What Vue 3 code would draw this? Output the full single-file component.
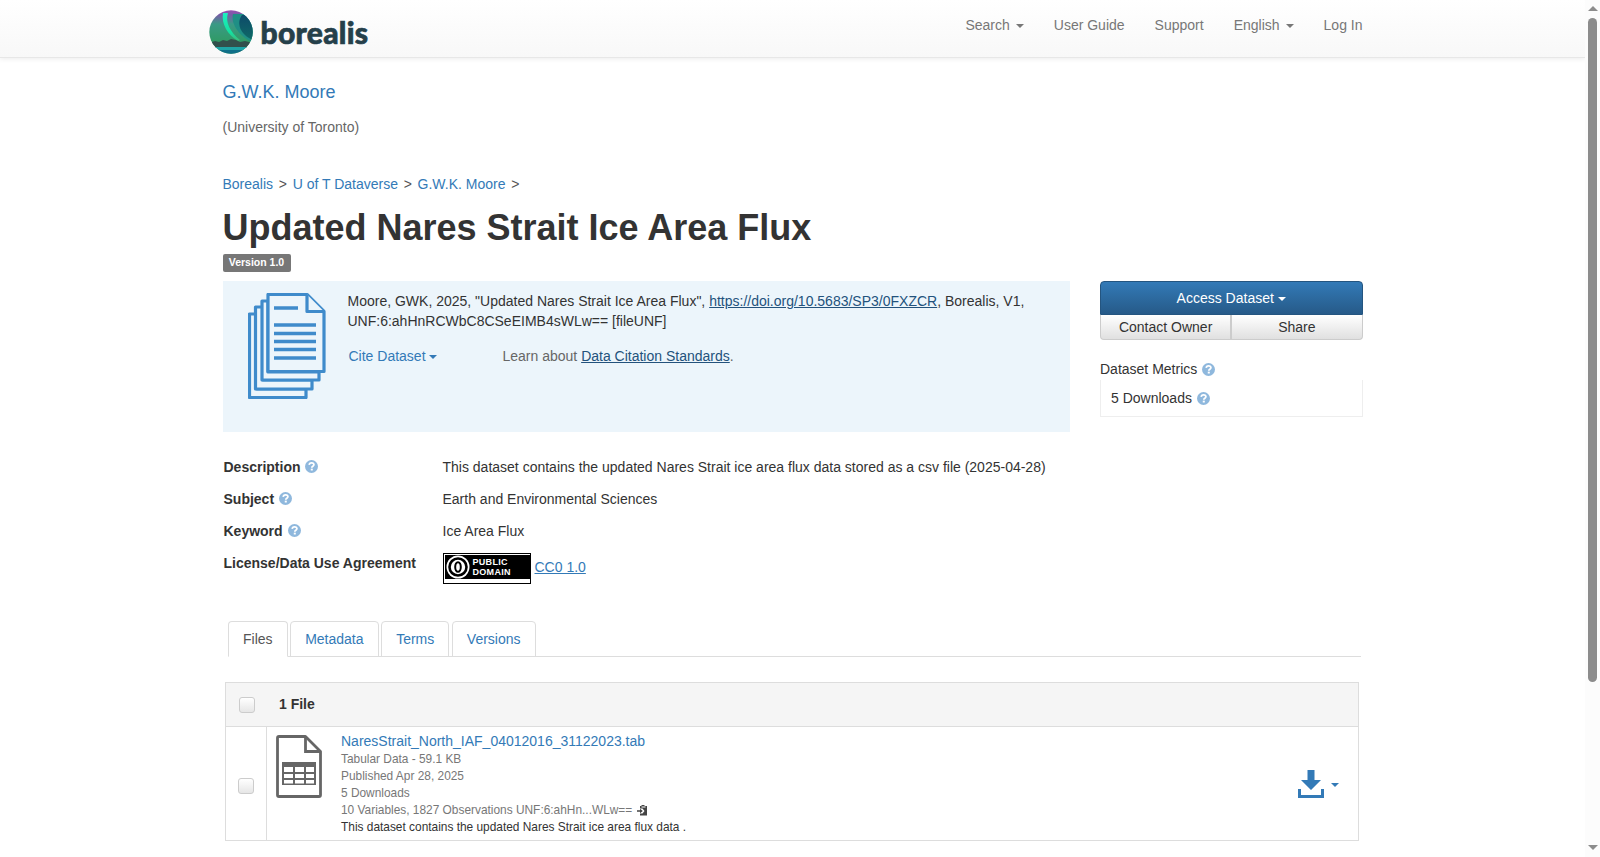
<template>
  <div class="shell">
    <div class="page">
      <header class="navbar">
        <div class="nav-inner">
          <a class="brand" href="#">
            <svg class="logo-mark" viewBox="0 0 44 44" width="44" height="44">
              <defs>
                <clipPath id="logoClip"><circle cx="22" cy="22" r="21.7" /></clipPath>
                <linearGradient id="skyGrad" x1="0" y1="0" x2="0" y2="1">
                  <stop offset="0" stop-color="#9a4fb0" />
                  <stop offset="0.1" stop-color="#7a5aa8" />
                  <stop offset="0.32" stop-color="#3a9a86" />
                  <stop offset="0.75" stop-color="#2f9a62" />
                </linearGradient>
                <linearGradient id="mintGrad" x1="0" y1="0" x2="0" y2="1">
                  <stop offset="0" stop-color="#1cf0c0" />
                  <stop offset="0.7" stop-color="#14e0a0" />
                  <stop offset="1" stop-color="#3fb87a" />
                </linearGradient>
                <linearGradient id="darkGrad" x1="0" y1="0" x2="0" y2="1">
                  <stop offset="0" stop-color="#0d4a6a" />
                  <stop offset="1" stop-color="#0f6a66" />
                </linearGradient>
              </defs>
              <g clip-path="url(#logoClip)">
                <rect width="44" height="44" fill="url(#skyGrad)" />
                <path d="M24 4C22 12 27 24 44 33V4Z" fill="#1f8f85" />
                <path d="M33 5C27 13 31 25 44 30V5Z" fill="url(#darkGrad)" />
                <path d="M14 3H19C16 12 21 22 31 30L29 31C19 25 12 14 14 3Z" fill="url(#mintGrad)" />
                <path d="M0 33L6 31 10 32 14 30 18 31 22 29 27 30 31 32 36 31 44 33V38H0Z" fill="#32504c" />
                <rect y="37" width="44" height="3" fill="#1fa5a6" />
                <rect y="40" width="44" height="4" fill="#0f6f88" />
              </g>
            </svg>
            <span class="logo-text">borealis</span>
          </a>
          <nav class="nav-links">
            <a v-for="item in navItems" :key="item.label" href="#">
              {{ item.label }}<span v-if="item.caret" class="caret nav-caret"></span>
            </a>
          </nav>
        </div>
      </header>

      <main class="container">
        <a class="author" href="#">G.W.K. Moore</a>
        <p class="affiliation">(University of Toronto)</p>

        <div class="breadcrumb">
          <template v-for="crumb in crumbs" :key="crumb">
            <a href="#">{{ crumb }}</a><span class="sep">&gt;</span>
          </template>
        </div>

        <h1>Updated Nares Strait Ice Area Flux</h1>
        <span class="version-label">Version 1.0</span>

        <div class="top-row">
          <section class="citation">
            <svg class="cite-icon" viewBox="0 0 78 106" width="78" height="106">
              <g fill="#ecf5fb" stroke="#3f8bcb" stroke-width="3.200" stroke-linejoin="round">
                <path d="M1.500 21H9V96H58V104.500H1.500Z" />
                <path d="M7.500 14H15V87H64V96H7.500Z" />
                <path d="M14 8H20V79H71V87H14Z" />
                <path d="M20 1.500H59L76 18.500V78.500H20Z" />
                <path d="M59 1.500V18.500H76" />
              </g>
              <path d="M26 15H50M26 32H68M26 40.500H68M26 48.500H68M26 56.500H68M26 65H68" stroke="#3f8bcb" stroke-width="3.400" />
            </svg>
            <div class="cite-body">
              <p class="cite-text">
                Moore, GWK, 2025, "Updated Nares Strait Ice Area Flux",
                <a class="dark-link" href="#">https://doi.org/10.5683/SP3/0FXZCR</a>, Borealis, V1,<br />
                UNF:6:ahHnRCWbC8CSeEIMB4sWLw== [fileUNF]
              </p>
              <div class="cite-actions">
                <a class="cite-drop" href="#">Cite Dataset<span class="caret cite-caret"></span></a>
                <span class="learn">Learn about <a class="dark-link" href="#">Data Citation Standards</a>.</span>
              </div>
            </div>
          </section>

          <aside class="side">
            <button class="btn-access">Access Dataset<span class="caret access-caret"></span></button>
            <div class="btn-pair">
              <button class="btn-plain">Contact Owner</button>
              <button class="btn-plain">Share</button>
            </div>
            <div class="metrics-title">
              Dataset Metrics
              <svg class="help" viewBox="0 0 14 14" width="13" height="13">
                <circle cx="7" cy="7" r="7" fill="#8fb8dd" />
                <path d="M4.500 5.300C4.600 3.800 5.700 3 7.100 3C8.500 3 9.600 3.900 9.600 5.200C9.600 6.700 7.300 6.800 7.300 8.400" fill="none" stroke="#fff" stroke-width="1.900" />
                <rect x="6.200" y="9.300" width="2.200" height="2" fill="#fff" />
              </svg>
            </div>
            <div class="metrics-box">
              5 Downloads
              <svg class="help" viewBox="0 0 14 14" width="13" height="13">
                <circle cx="7" cy="7" r="7" fill="#8fb8dd" />
                <path d="M4.500 5.300C4.600 3.800 5.700 3 7.100 3C8.500 3 9.600 3.900 9.600 5.200C9.600 6.700 7.300 6.800 7.300 8.400" fill="none" stroke="#fff" stroke-width="1.900" />
                <rect x="6.200" y="9.300" width="2.200" height="2" fill="#fff" />
              </svg>
            </div>
          </aside>
        </div>

        <dl class="meta">
          <template v-for="row in metaRows" :key="row.label">
            <dt>
              {{ row.label }}
              <svg class="help" viewBox="0 0 14 14" width="13" height="13">
                <circle cx="7" cy="7" r="7" fill="#8fb8dd" />
                <path d="M4.500 5.300C4.600 3.800 5.700 3 7.100 3C8.500 3 9.600 3.900 9.600 5.200C9.600 6.700 7.300 6.800 7.300 8.400" fill="none" stroke="#fff" stroke-width="1.900" />
                <rect x="6.200" y="9.300" width="2.200" height="2" fill="#fff" />
              </svg>
            </dt>
            <dd>{{ row.value }}</dd>
          </template>
          <dt>License/Data Use Agreement</dt>
          <dd class="license">
            <span class="cc-badge">
              <span class="cc-inner">
                <svg viewBox="0 0 24 24" width="24" height="24">
                  <circle cx="12" cy="12" r="11.500" fill="#fff" />
                  <circle cx="12" cy="12" r="8.500" fill="#fff" stroke="#000" stroke-width="2.600" />
                  <ellipse cx="12" cy="12" rx="2.800" ry="4.800" fill="none" stroke="#000" stroke-width="2" />
                </svg>
                <span class="cc-text">PUBLIC<br />DOMAIN</span>
              </span>
            </span>
            <a class="cc-link" href="#">CC0 1.0</a>
          </dd>
        </dl>

        <ul class="tabs">
          <li v-for="(tab, i) in tabs" :key="tab" :class="{ active: i === 0 }"><a href="#">{{ tab }}</a></li>
        </ul>

        <div class="files">
          <div class="files-head">
            <span class="check head-check"></span>
            <strong>1 File</strong>
          </div>
          <div class="file-row">
            <div class="file-check"><span class="check"></span></div>
            <svg class="file-icon" viewBox="0 0 46 63" width="46" height="63">
              <path d="M1.500 3C1.500 2 2 1.500 3 1.500H29.500L44.500 16.500V60C44.500 61 44 61.500 43 61.500H3C2 61.500 1.500 61 1.500 60Z" fill="#fff" stroke="#666" stroke-width="2.800" stroke-linejoin="round" />
              <path d="M29.500 1.500V16.500H44.500" fill="none" stroke="#666" stroke-width="2.800" />
              <path d="M6 27H40V50H6Z" fill="#666" />
              <path d="M8 32H17V37H8ZM19 32H28V37H19ZM30 32H38V37H30ZM8 39H17V43H8ZM19 39H28V43H19ZM30 39H38V43H30ZM8 45H17V48.500H8ZM19 45H28V48.500H19ZM30 45H38V48.500H30Z" fill="#fff" />
            </svg>
            <div class="file-info">
              <a class="file-name" href="#">NaresStrait_North_IAF_04012016_31122023.tab</a>
              <div>Tabular Data - 59.1 KB</div>
              <div>Published Apr 28, 2025</div>
              <div>5 Downloads</div>
              <div>
                10 Variables, 1827 Observations UNF:6:ahHn...WLw==
                <svg class="copy-icon" viewBox="0 0 12 12" width="12" height="12">
                  <path d="M4 2H5.500V1H8.500V2H11V11.500H4V9.500H6.500L8.500 7 6.500 4.500H4Z" fill="#444" />
                  <path d="M5.500 2.500H9.500V3.500H5.500Z" fill="#fff" />
                  <path d="M1 6.200H4V4.800L6.800 7 4 9.200V7.800H1Z" fill="#444" />
                </svg>
              </div>
              <div class="file-desc">This dataset contains the updated Nares Strait ice area flux data .</div>
            </div>
            <div class="file-download">
              <svg viewBox="0 0 26 28" width="26" height="28">
                <path d="M9.500 0H16.500V10H23L13 20 3 10H9.500Z" fill="#337ab7" />
                <path d="M0 19H3V25H23V19H26V28H0Z" fill="#337ab7" />
              </svg>
              <span class="caret dl-caret"></span>
            </div>
          </div>
        </div>
      </main>
    </div>

    <div class="scroll-rail">
      <span class="arrow-up"></span>
      <div class="scroll-track"><div class="scroll-thumb"></div></div>
      <span class="arrow-down"></span>
    </div>
  </div>
</template>

<script setup>
const navItems = [
  { label: 'Search', caret: true },
  { label: 'User Guide' },
  { label: 'Support' },
  { label: 'English', caret: true },
  { label: 'Log In' }
];

const crumbs = ['Borealis', 'U of T Dataverse', 'G.W.K. Moore'];

const metaRows = [
  { label: 'Description', value: 'This dataset contains the updated Nares Strait ice area flux data stored as a csv file (2025-04-28)' },
  { label: 'Subject', value: 'Earth and Environmental Sciences' },
  { label: 'Keyword', value: 'Ice Area Flux' }
];

const tabs = ['Files', 'Metadata', 'Terms', 'Versions'];
</script>

<style>
body {
  margin: 0;
  background: #fff;
  overflow: hidden;
}
</style>

<style scoped>
.shell {
  display: flex;
  height: 857px;
  overflow: hidden;
}

.page {
  flex: 1;
  min-width: 0;
  overflow: hidden;
  font-family: "Liberation Sans", Arial, sans-serif;
  font-size: 14px;
  line-height: 20px;
  color: #333;
}

.scroll-rail {
  width: 15px;
  flex: none;
  box-sizing: border-box;
  padding: 6px 0 7px;
  background: #fcfcfc;
  display: flex;
  flex-direction: column;
  align-items: center;
}

.arrow-up,
.arrow-down {
  width: 0;
  height: 0;
  flex: none;
  border-left: 5px solid transparent;
  border-right: 5px solid transparent;
}

.arrow-up {
  border-bottom: 5px solid #8c8c8c;
}

.arrow-down {
  border-top: 5px solid #8c8c8c;
}

.scroll-track {
  flex: 1;
  width: 9px;
  padding-top: 7px;
}

.scroll-thumb {
  height: 664px;
  background: #8c8c8c;
  border-radius: 5px;
}

a {
  color: #337ab7;
  text-decoration: none;
}

.navbar {
  height: 57px;
  background: linear-gradient(to bottom, #fff 0%, #f8f8f8 100%);
  border-bottom: 1px solid #e7e7e7;
  box-shadow: 0 1px 5px rgba(0, 0, 0, 0.08);
}

.nav-inner {
  width: 1170px;
  margin: 0 auto;
  height: 57px;
  display: flex;
  justify-content: space-between;
  align-items: center;
  padding: 0 15px 0 1px;
  box-sizing: border-box;
}

.brand {
  display: flex;
  align-items: center;
  gap: 8px;
}

.logo-mark {
  display: block;
  margin-top: 6px;
}

.logo-text {
  font-family: "Lato", sans-serif;
  font-weight: 900;
  font-size: 30px;
  line-height: 44px;
  margin-top: 6px;
  color: #25404a;
  letter-spacing: 0.3px;
  -webkit-text-stroke: 0.7px #25404a;
}

.nav-links {
  display: flex;
  gap: 30px;
  margin-top: -7px;
}

.nav-links a {
  color: #777;
}

.caret {
  display: inline-block;
  width: 0;
  height: 0;
  vertical-align: middle;
  border-top: 4px solid currentColor;
  border-left: 4px solid transparent;
  border-right: 4px solid transparent;
}

.nav-caret {
  margin-left: 6px;
}

.container {
  width: 1170px;
  margin: 0 auto;
  padding: 22px 15px 0;
  box-sizing: border-box;
}

.author {
  display: block;
  font-size: 18px;
  line-height: 24px;
}

.affiliation {
  margin: 13px 0 0;
  color: #666;
}

.breadcrumb {
  margin-top: 37px;
  height: 20px;
}

.sep {
  margin: 0 5.700px;
  color: #555;
}

h1 {
  margin: 14px 0 0;
  font-size: 36px;
  line-height: 40px;
  font-weight: 700;
  color: #333;
}

.version-label {
  display: block;
  width: 68px;
  height: 18px;
  margin-top: 6px;
  background: #777;
  border-radius: 2px;
  color: #fff;
  font-size: 10.500px;
  font-weight: 700;
  line-height: 17px;
  text-align: center;
}

.top-row {
  display: grid;
  grid-template-columns: 847.500px 262.500px;
  column-gap: 30px;
  margin-top: 9px;
}

.citation {
  height: 151px;
  background: #ecf5fb;
  display: flex;
  padding: 12px 0 0 25px;
  box-sizing: border-box;
}

.cite-icon {
  flex: none;
}

.cite-body {
  margin-left: 22px;
  margin-top: -2px;
}

.cite-text {
  margin: 0;
  width: 680px;
}

.cite-actions {
  display: flex;
  margin-top: 15px;
  padding-left: 1px;
}

.cite-drop {
  width: 154px;
}

.cite-caret {
  margin-left: 3px;
}

.learn {
  color: #666;
}

.dark-link {
  color: #23527c;
  text-decoration: underline;
}

.cc-link {
  color: #337ab7;
  text-decoration: underline;
  margin-top: -3px;
}

.btn-access {
  display: block;
  width: 100%;
  height: 34px;
  background: linear-gradient(to bottom, #337ab7 0%, #265a88 100%);
  border: 1px solid #245580;
  border-radius: 4px 4px 0 0;
  color: #fff;
  font: inherit;
}

.access-caret {
  margin-left: 4px;
}

.btn-pair {
  display: flex;
}

.btn-plain {
  flex: 1;
  height: 25px;
  padding: 0;
  background: linear-gradient(to bottom, #fff 0%, #e0e0e0 100%);
  border: 1px solid #ccc;
  border-top: 0;
  color: #333;
  font: inherit;
  line-height: 22px;
}

.btn-plain:first-child {
  border-radius: 0 0 0 4px;
}

.btn-plain:last-child {
  border-radius: 0 0 4px 0;
}

.metrics-title {
  margin-top: 19px;
  color: #333;
  display: flex;
  align-items: center;
  gap: 5px;
}

.metrics-box {
  height: 37px;
  margin-top: 1px;
  padding: 0 10px;
  box-sizing: border-box;
  border: 1px solid #eee;
  border-top: 0;
  display: flex;
  align-items: center;
  gap: 5px;
}

.help {
  flex: none;
  vertical-align: -1px;
}

.meta {
  display: grid;
  grid-template-columns: 219px 1fr;
  row-gap: 12px;
  margin: 25px 0 0;
  padding-left: 1px;
}

.meta dt {
  font-weight: 700;
}

.meta dt .help {
  margin-left: 1px;
}

.meta dd {
  margin: 0;
}

.license {
  display: flex;
  align-items: center;
  gap: 4px;
}

.cc-badge {
  width: 88px;
  height: 31px;
  box-sizing: border-box;
  border: 1px solid #000;
  background: #fff;
  padding: 1px 0 4px 1px;
}

.cc-inner {
  display: flex;
  align-items: center;
  gap: 3px;
  height: 100%;
  background: #000;
  overflow: hidden;
}

.cc-inner svg {
  flex: none;
  margin-left: 1px;
}

.cc-text {
  color: #fff;
  font-size: 9px;
  font-weight: 700;
  line-height: 10px;
  letter-spacing: 0.3px;
}

.tabs {
  list-style: none;
  display: flex;
  gap: 2.600px;
  margin: 37px 2px 0 5.500px;
  padding: 0;
  height: 35px;
  border-bottom: 1px solid #ddd;
}

.tabs li {
  height: 36px;
  box-sizing: border-box;
  border: 1px solid #ddd;
  border-radius: 4px 4px 0 0;
  padding: 0 14px;
  line-height: 35px;
}

.tabs li.active {
  background: #fff;
  border-bottom-color: #fff;
}

.tabs li.active a {
  color: #555;
}

.files {
  margin: 25px 3.500px 0 2.500px;
  border: 1px solid #ddd;
}

.files-head {
  height: 43px;
  background: #f5f5f5;
  border-bottom: 1px solid #ddd;
  display: flex;
  align-items: center;
  padding-left: 13px;
}

.files-head strong {
  margin: -2px 0 0 24px;
}

.check {
  display: block;
  width: 16px;
  height: 16px;
  box-sizing: border-box;
  border: 1px solid #ccc;
  border-radius: 3px;
  background: linear-gradient(to bottom, #fff, #e6e6e6);
}

.file-row {
  height: 113px;
  display: flex;
}

.file-check {
  width: 41px;
  flex: none;
  border-right: 1px solid #ddd;
  display: flex;
  align-items: center;
  padding-left: 12px;
  box-sizing: border-box;
  padding-top: 4px;
}

.file-icon {
  flex: none;
  margin: 8px 0 0 9px;
}

.file-info {
  margin-left: 19px;
  font-size: 11.900px;
  line-height: 17px;
  color: #777;
  padding-top: 4px;
  flex: 1;
}

.file-name {
  display: block;
  font-size: 14px;
  line-height: 20px;
}

.file-desc {
  color: #333;
}

.copy-icon {
  vertical-align: -2px;
}

.file-download {
  display: flex;
  align-items: center;
  gap: 7px;
  margin: 0 19px 0 0;
  color: #337ab7;
}

.file-download svg {
  display: block;
}

.dl-caret {
  margin-top: 3px;
}
</style>
